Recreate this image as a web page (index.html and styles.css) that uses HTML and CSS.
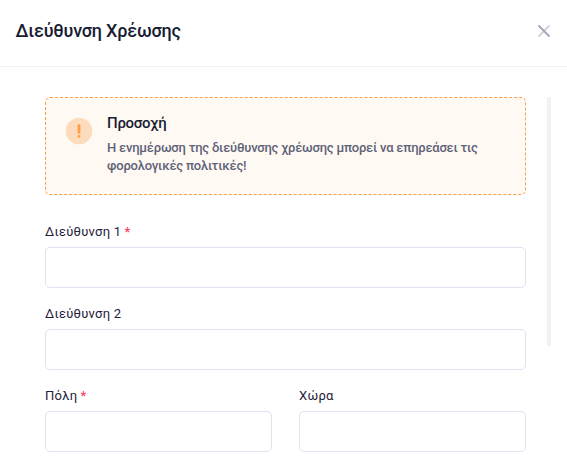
FILE: index.html
```html
<!DOCTYPE html>
<html lang="el">
<head>
<meta charset="utf-8">
<title>Διεύθυνση Χρέωσης</title>
<link rel="stylesheet" href="styles.css">
</head>
<body>
<div class="modal">
  <header class="modal-header">
    <h2>Διεύθυνση Χρέωσης</h2>
    <button class="close" type="button" aria-label="Close">
      <svg width="12" height="12" viewBox="0 0 12 12" fill="none" stroke="#a1a5b7" stroke-width="1.8" stroke-linecap="round"><path d="M11 1L1 11" opacity=".5"/><path d="M1 1L11 11"/></svg>
    </button>
  </header>
  <div class="modal-body">
    <form class="form">
      <div class="notice">
        <svg class="notice-icon" width="28" height="28" viewBox="0 0 28 28"><circle cx="14" cy="14" r="13.3" fill="#fddcbd"/><rect x="12.6" y="7.2" width="2.8" height="9.6" rx="1" fill="#ff9f43"/><rect x="12.6" y="18" width="2.8" height="2.8" rx="1.2" fill="#ff9f43"/></svg>
        <div>
          <h4>Προσοχή</h4>
          <p>Η ενημέρωση της διεύθυνσης χρέωσης μπορεί να επηρεάσει τις φορολογικές πολιτικές!</p>
        </div>
      </div>
      <div class="field"><label for="a1">Διεύθυνση 1<span class="required">*</span></label><input id="a1"></div>
      <div class="field"><label for="a2">Διεύθυνση 2</label><input id="a2"></div>
      <div class="row">
        <div class="field"><label for="city">Πόλη<span class="required">*</span></label><input id="city"></div>
        <div class="field"><label for="country">Χώρα</label><input id="country"></div>
      </div>
    </form>
    <div class="scrollbar"></div>
  </div>
</div>
</body>
</html>
```
FILE: styles.css
```css
* { box-sizing: border-box; }
body { margin: 0; background: #fff; color: #181c32; font-family: Roboto, sans-serif; overflow: hidden; }
.modal { height: 470px; }
.modal-header { display: flex; align-items: center; justify-content: space-between; height: 67px; padding: 0 17px 4px 15.6px; border-bottom: 1px solid #eff2f5; }
h2 { margin: 0; font-size: 18px; line-height: 22px; font-weight: 500; letter-spacing: -.21px; }
.close { display: flex; padding: 0; border: 0; background: none; }
.modal-body { display: flex; justify-content: space-between; padding: 30px 16px 0 45px; }
.form { width: 481px; }
.notice { display: flex; height: 98px; padding: 16px 20px; margin-bottom: 27px; border: 1px dashed #ff9f43; border-radius: 5px; background: #fff9f3; }
.notice-icon { flex: none; margin: 3px 14.1px 0 -1px; }
h4 { margin: 0 0 7px; font-size: 15px; line-height: 18px; font-weight: 500; letter-spacing: -.3px; }
p { margin: 0; font-size: 13px; line-height: 18px; font-weight: 500; letter-spacing: -.225px; color: #5e6278; }
.field { margin-bottom: 16px; }
label { display: block; height: 25px; font-size: 13px; line-height: 20px; letter-spacing: .26px; color: #1e2139; }
.required { margin-left: 3.2px; font-weight: 500; color: #f1416c; }
input { display: block; width: 100%; height: 41px; border: 1px solid #e1e1ef; border-radius: 5px; background: #fff; }
.row { display: grid; grid-template-columns: 1fr 1fr; gap: 27px; }
.scrollbar { width: 4px; height: 249px; background: #eff2f5; }
```
